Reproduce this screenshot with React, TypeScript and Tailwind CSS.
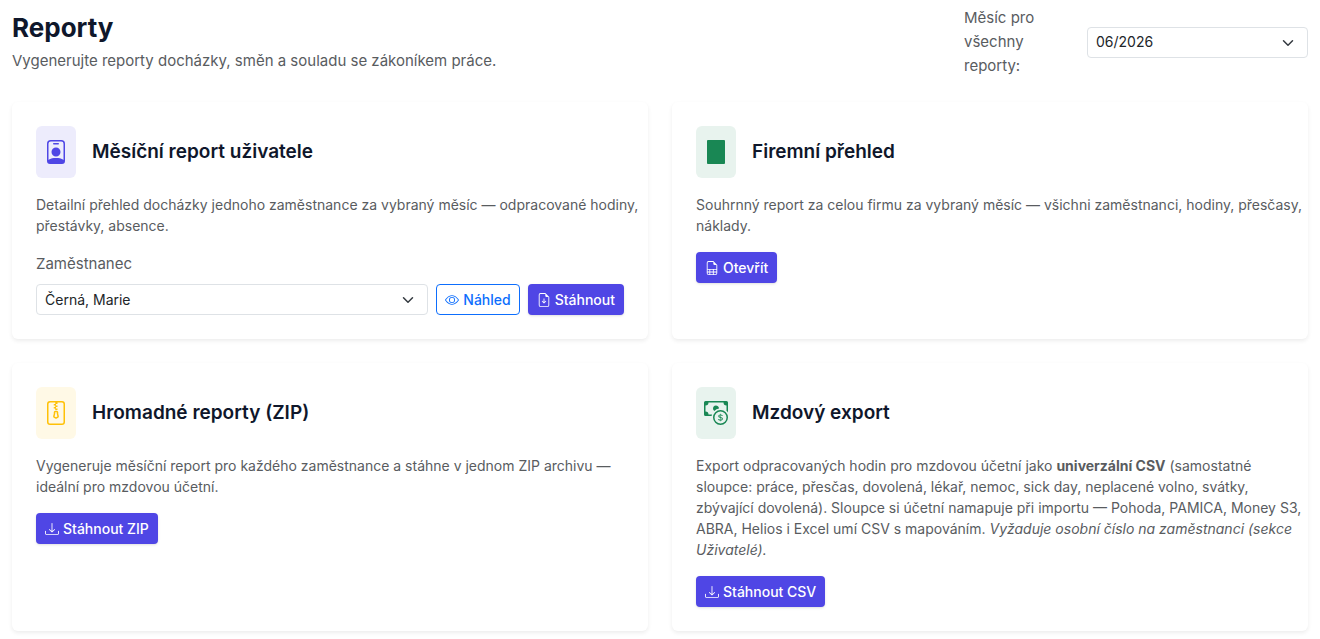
import { useState } from 'react'
import type { ReactNode } from 'react'
import {
  BsCashCoin,
  BsDownload,
  BsEye,
  BsFileEarmarkArrowDown,
  BsFileEarmarkSpreadsheet,
  BsFileZip,
  BsPersonBadge,
} from 'react-icons/bs'

const primaryBtn =
  'flex h-[31px] items-center gap-1 whitespace-nowrap rounded bg-[#4f46e5] px-[9px] text-sm font-medium text-white shadow-sm hover:bg-[#4338ca]'

function CompanyIcon() {
  return (
    <svg viewBox="0 0 16 16" width="24" height="24" fill="currentColor">
      <rect x="2" y="0" width="12" height="16" rx="0.6" />
    </svg>
  )
}

function Select({ id, value, onChange, options }: {
  id: string
  value: string
  onChange: (v: string) => void
  options: string[]
}) {
  return (
    <div className="relative w-full">
      <select
        id={id}
        value={value}
        onChange={e => onChange(e.target.value)}
        className="block h-[31px] w-full appearance-none rounded border border-[#dee2e6] bg-white pl-2 pr-9 text-sm text-[#212529]"
      >
        {options.map(o => <option key={o}>{o}</option>)}
      </select>
      <svg viewBox="0 0 16 16" className="pointer-events-none absolute right-[14px] top-[10px] h-3 w-3" fill="none" stroke="#343a40" strokeWidth="2" strokeLinecap="round" strokeLinejoin="round">
        <path d="m2 5 6 6 6-6" />
      </svg>
    </div>
  )
}

function Card({ icon, tone, title, text, children }: {
  icon: ReactNode
  tone: string
  title: string
  text: ReactNode
  children: ReactNode
}) {
  return (
    <section className="rounded-md bg-white p-6 shadow-[0_2px_4px_rgba(0,0,0,0.075)]">
      <div className="mb-4 flex items-center gap-4">
        <div className={`flex h-[52px] w-10 shrink-0 items-center justify-center rounded-md ${tone}`}>{icon}</div>
        <h2 className="text-[19px] leading-6 font-semibold text-slate-900">{title}</h2>
      </div>
      <p className="mb-4 -mr-5 text-sm leading-[21px] text-[#595c5f]">{text}</p>
      {children}
    </section>
  )
}

export default function App() {
  const [month, setMonth] = useState('06/2026')
  const [employee, setEmployee] = useState('Černá, Marie')

  return (
    <main className="bg-white px-3 pt-[6px] pb-2 font-['Inter',sans-serif] text-[#212529]">
      {/* Page header */}
      <header className="mb-6 flex items-center justify-between gap-6">
        <div>
          <h1 className="mb-1 text-[26px] leading-[34px] font-bold text-slate-900">Reporty</h1>
          <p className="text-[15px] leading-6 text-[#595c5f]">Vygenerujte reporty docházky, směn a souladu se zákoníkem práce.</p>
        </div>
        <div className="flex w-[344px] items-center gap-4">
          <label htmlFor="month" className="w-[107px] shrink-0 pr-6 text-[15px] leading-6 text-[#595c5f]">Měsíc pro všechny reporty:</label>
          <Select id="month" value={month} onChange={setMonth} options={['06/2026', '05/2026', '04/2026']} />
        </div>
      </header>

      <div className="grid gap-6 md:grid-cols-2">
        <Card
          icon={<BsPersonBadge size={24} />}
          tone="bg-[#edecfc] text-[#4f46e5]"
          title="Měsíční report uživatele"
          text="Detailní přehled docházky jednoho zaměstnance za vybraný měsíc — odpracované hodiny, přestávky, absence."
        >
          <label htmlFor="employee" className="mb-2 block text-[15px] leading-6 text-[#595c5f]">Zaměstnanec</label>
          <div className="flex gap-2">
            <Select id="employee" value={employee} onChange={setEmployee} options={['Černá, Marie', 'Novák, Jan']} />
            <button className="flex h-[31px] items-center gap-1 rounded border border-[#0d6efd] px-2 text-sm font-medium text-[#0d6efd]">
              <BsEye size={14} /> Náhled
            </button>
            <button className={primaryBtn}><BsFileEarmarkArrowDown size={14} /> Stáhnout</button>
          </div>
        </Card>

        <Card
          icon={<CompanyIcon />}
          tone="bg-[#e8f3ee] text-[#198754]"
          title="Firemní přehled"
          text="Souhrnný report za celou firmu za vybraný měsíc — všichni zaměstnanci, hodiny, přesčasy, náklady."
        >
          <button className={primaryBtn}><BsFileEarmarkSpreadsheet size={14} /> Otevřít</button>
        </Card>

        <Card
          icon={<BsFileZip size={24} />}
          tone="bg-[#fff9e6] text-[#ffc107]"
          title="Hromadné reporty (ZIP)"
          text="Vygeneruje měsíční report pro každého zaměstnance a stáhne v jednom ZIP archivu — ideální pro mzdovou účetní."
        >
          <button className={primaryBtn}><BsDownload size={14} /> Stáhnout ZIP</button>
        </Card>

        <Card
          icon={<BsCashCoin size={24} />}
          tone="bg-[#e8f3ee] text-[#198754]"
          title="Mzdový export"
          text={
            <>
              Export odpracovaných hodin pro mzdovou účetní jako <strong>univerzální CSV</strong> (samostatné
              sloupce: práce, přesčas, dovolená, lékař, nemoc, sick day, neplacené volno, svátky, zbývající
              dovolená). Sloupce si účetní namapuje při importu — Pohoda, PAMICA, Money S3, ABRA, Helios i Excel
              umí CSV s mapováním. <em>Vyžaduje osobní číslo na zaměstnanci (sekce Uživatelé).</em>
            </>
          }
        >
          <button className={primaryBtn}><BsDownload size={14} /> Stáhnout CSV</button>
        </Card>
      </div>
    </main>
  )
}
